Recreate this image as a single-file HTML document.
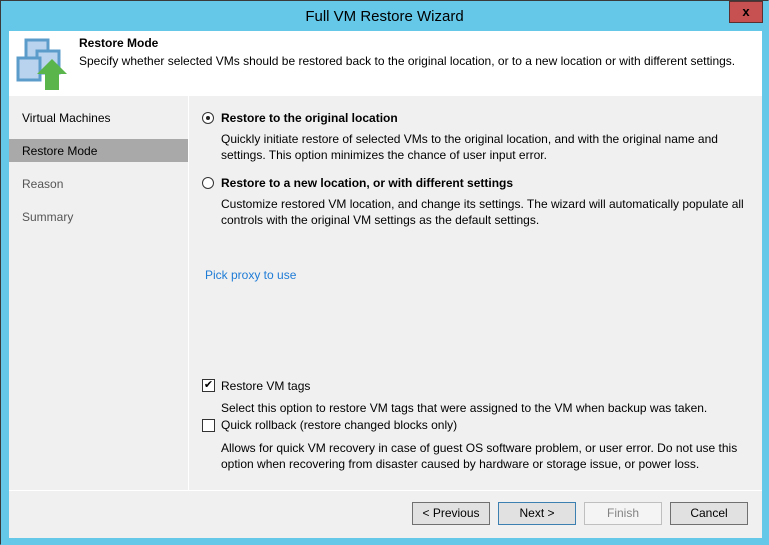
<!DOCTYPE html><html><head><style>
*{margin:0;padding:0;box-sizing:border-box}
body{width:769px;height:545px;background:#65c8e9;font-family:"Liberation Sans",sans-serif;font-size:12px;color:#000;position:relative;overflow:hidden}
.a{position:absolute}
.btn{position:absolute;top:502px;width:78px;height:23px;border:1px solid #707070;background:#e1e1e1;text-align:center;line-height:21px;font-size:12px}
p.d{position:absolute;left:221px;line-height:16px;font-size:12px}
</style></head><body>
<div class="a" style="left:0;top:0;width:769px;height:545px;border:1px solid #3a3a3a;border-bottom-color:#65c8e9;border-right-color:#65c8e9"></div>
<div class="a" style="left:0;top:8px;width:769px;text-align:center;font-size:15px">Full VM Restore Wizard</div>
<div class="a" style="left:729px;top:1px;width:34px;height:22px;background:#c75050;border:1px solid #5a3030;text-align:center;font-weight:bold;line-height:20px;font-size:13px">x</div>
<div class="a" style="left:9px;top:31px;width:753px;height:507px;background:#f0f0f0"></div>
<div class="a" style="left:9px;top:31px;width:753px;height:65px;background:#fff"></div>
<svg class="a" style="left:15px;top:36px" width="56" height="56"><rect x="11" y="4" width="22" height="22" fill="#b9d3ee" stroke="#5b9ccb" stroke-width="3"/><rect x="22" y="15" width="22" height="22" fill="#b9d3ee" stroke="#5b9ccb" stroke-width="3"/><rect x="3" y="22" width="22" height="22" fill="#b9d3ee" stroke="#5b9ccb" stroke-width="3"/><path d="M37 23 L52 38 L44 38 L44 54 L30 54 L30 38 L22 38 Z" fill="#5ab54b"/></svg>
<div class="a" style="left:79px;top:36px;font-weight:bold">Restore Mode</div>
<div class="a" style="left:79px;top:54px">Specify whether selected VMs should be restored back to the original location, or to a new location or with different settings.</div>
<div class="a" style="left:9px;top:139px;width:179px;height:23px;background:#a9a9a9"></div>
<div class="a" style="left:22px;top:111px">Virtual Machines</div>
<div class="a" style="left:22px;top:144px">Restore Mode</div>
<div class="a" style="left:22px;top:177px;color:#555">Reason</div>
<div class="a" style="left:22px;top:210px;color:#555">Summary</div>
<div class="a" style="left:188px;top:96px;width:1px;height:395px;background:#fff"></div>
<div class="a" style="left:9px;top:490px;width:753px;height:1px;background:#fff"></div>
<div class="a" style="left:202px;top:112px;width:12px;height:12px;border:1px solid #333;border-radius:50%;background:#fff"><div class="a" style="left:3px;top:3px;width:4px;height:4px;border-radius:50%;background:#222"></div></div>
<div class="a" style="left:221px;top:111px;font-weight:bold">Restore to the original location</div>
<p class="d" style="top:131px">Quickly initiate restore of selected VMs to the original location, and with the original name and<br>settings. This option minimizes the chance of user input error.</p>
<div class="a" style="left:202px;top:177px;width:12px;height:12px;border:1px solid #333;border-radius:50%;background:#fff"></div>
<div class="a" style="left:221px;top:176px;font-weight:bold">Restore to a new location, or with different settings</div>
<p class="d" style="top:196px">Customize restored VM location, and change its settings. The wizard will automatically populate all<br>controls with the original VM settings as the default settings.</p>
<div class="a" style="left:205px;top:268px;color:#1e7bd6">Pick proxy to use</div>
<div class="a" style="left:202px;top:379px;width:13px;height:13px;border:1px solid #333;background:#fff;font-size:11px;line-height:11px;text-align:center">✔</div>
<div class="a" style="left:221px;top:379px">Restore VM tags</div>
<p class="d" style="top:400px">Select this option to restore VM tags that were assigned to the VM when backup was taken.</p>
<div class="a" style="left:202px;top:419px;width:13px;height:13px;border:1px solid #333;background:#fff"></div>
<div class="a" style="left:221px;top:418px">Quick rollback (restore changed blocks only)</div>
<p class="d" style="top:440px">Allows for quick VM recovery in case of guest OS software problem, or user error. Do not use this<br>option when recovering from disaster caused by hardware or storage issue, or power loss.</p>
<div class="btn" style="left:412px">&lt; Previous</div>
<div class="btn" style="left:498px;border-color:#3c7fb1">Next &gt;</div>
<div class="btn" style="left:584px;border-color:#bfbfbf;background:#f4f4f4;color:#838383">Finish</div>
<div class="btn" style="left:670px">Cancel</div>
</body></html>
